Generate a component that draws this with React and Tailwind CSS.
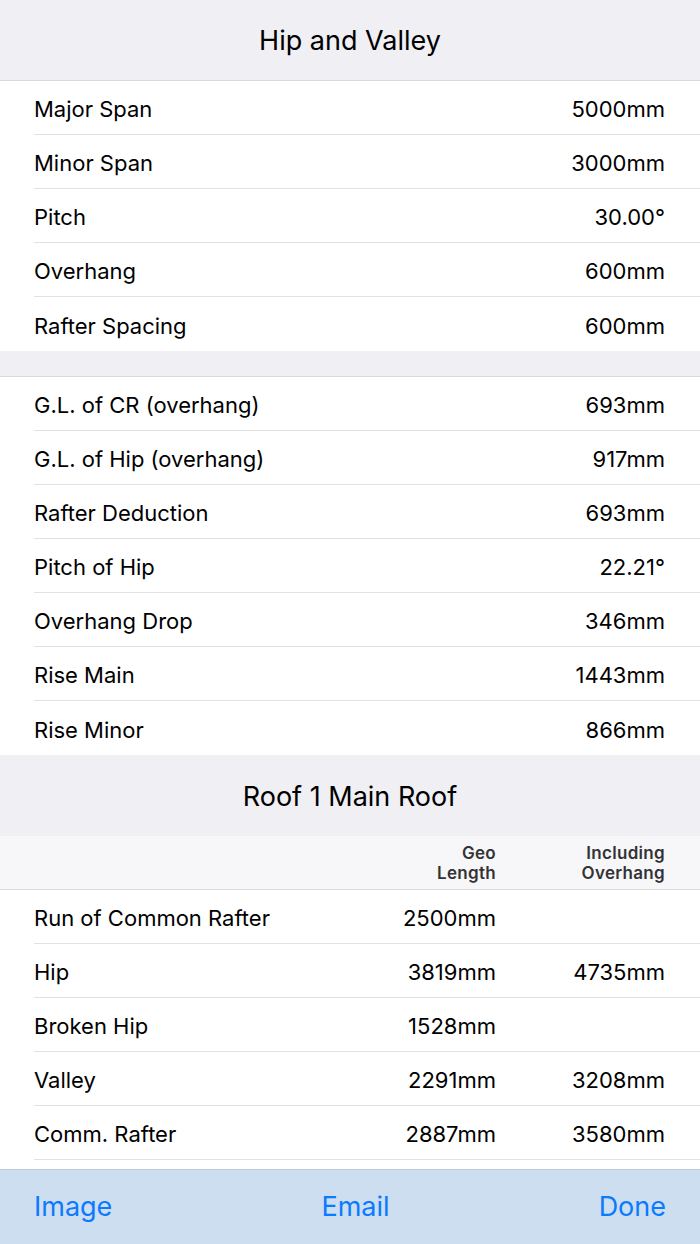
const INPUTS = [
  ['Major Span', '5000mm'],
  ['Minor Span', '3000mm'],
  ['Pitch', '30.00°'],
  ['Overhang', '600mm'],
  ['Rafter Spacing', '600mm'],
]

const RESULTS = [
  ['G.L. of CR (overhang)', '693mm'],
  ['G.L. of Hip (overhang)', '917mm'],
  ['Rafter Deduction', '693mm'],
  ['Pitch of Hip', '22.21°'],
  ['Overhang Drop', '346mm'],
  ['Rise Main', '1443mm'],
  ['Rise Minor', '866mm'],
]

const ROOF = [
  ['Run of Common Rafter', '2500mm', ''],
  ['Hip', '3819mm', '4735mm'],
  ['Broken Hip', '1528mm', ''],
  ['Valley', '2291mm', '3208mm'],
  ['Comm. Rafter', '2887mm', '3580mm'],
]

function Row({ label, value, last }) {
  return (
    <div className="h-[54px] pl-[34px] bg-white">
      <div className={`h-full flex items-center justify-between pr-[35px] pt-[4px] ${last ? '' : 'border-b border-[#e2e2e6]'}`}>
        <span>{label}</span>
        <span>{value}</span>
      </div>
    </div>
  )
}

export default function App() {
  return (
    <div className="w-[700px] h-[1244px] bg-white text-black text-[22px] overflow-hidden flex flex-col" style={{ fontFamily: 'Inter, "Noto Sans", sans-serif' }}>
      {/* Title */}
      <div className="h-[81px] shrink-0 bg-[#efeff4] border-b border-[#d9d9dd] flex items-center justify-center text-[27px] pt-[3px]">
        Hip and Valley
      </div>

      {INPUTS.map(([l, v], i) => (
        <Row key={l} label={l} value={v} last={i === INPUTS.length - 1} />
      ))}

      <div className="h-[26px] shrink-0 bg-[#efeff4] border-b border-[#d9d9dd]" />

      {RESULTS.map(([l, v], i) => (
        <Row key={l} label={l} value={v} last={i === RESULTS.length - 1} />
      ))}

      {/* Roof section */}
      <div className="h-[81px] shrink-0 bg-[#efeff4] flex items-center justify-center text-[27px] pt-[3px]">
        Roof 1 Main Roof
      </div>
      <div className="h-[54px] shrink-0 bg-[#f7f7f9] border-b border-[#d9d9dd] flex items-center pl-[34px] pr-[35px] text-[17px] leading-[20px] font-semibold text-[#333336] tracking-[0.3px]">
        <div className="flex-1" />
        <div className="w-[150px] text-right">Geo<br />Length</div>
        <div className="w-[169px] text-right">Including<br />Overhang</div>
      </div>
      {ROOF.map(([l, a, b]) => (
        <div key={l} className="h-[54px] shrink-0 pl-[34px] bg-white">
          <div className="h-full flex items-center pr-[35px] pt-[4px] border-b border-[#e2e2e6]">
            <span className="flex-1">{l}</span>
            <span className="w-[150px] text-right">{a}</span>
            <span className="w-[169px] text-right">{b}</span>
          </div>
        </div>
      ))}

      <div className="flex-1" />

      {/* Toolbar */}
      <div className="h-[75px] shrink-0 bg-[#cddef0] border-t border-[#bccbdb] flex items-center justify-between px-[34px] text-[27px] text-[#0a7aff]">
        <span>Image</span>
        <span>Email</span>
        <span>Done</span>
      </div>
    </div>
  )
}
